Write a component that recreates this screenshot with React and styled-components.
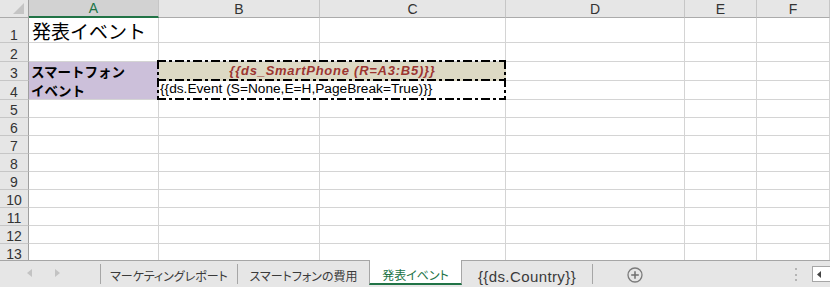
import React from 'react';
import styled, { createGlobalStyle } from 'styled-components';

const GlobalStyle = createGlobalStyle`
  html, body {
    margin: 0;
    padding: 0;
    background: #fff;
    overflow: hidden;
  }
  body {
    width: 830px;
    height: 287px;
    font-family: "Liberation Sans", "Noto Sans CJK JP", sans-serif;
  }
`;

const COLUMNS = ['A', 'B', 'C', 'D', 'E', 'F'];
const TAIL_COLUMNS = ['D', 'E', 'F'];
const PLAIN_ROWS = [5, 6, 7, 8, 9, 10, 11, 12, 13];

const App = () => {
  return (
    <Window>
      <GlobalStyle />

      <Sheet>
        <Corner>
          <svg width="11" height="11" viewBox="0 0 11 11">
            <path d="M11 0 L11 11 L0 11 Z" fill="#c4c4c4" />
          </svg>
        </Corner>
        {COLUMNS.map((c) => (
          <ColHead key={c} $selected={c === 'A'}>{c}</ColHead>
        ))}

        {/* row 1 */}
        <RowHead>1</RowHead>
        <TitleCell>発表イベント</TitleCell>
        {COLUMNS.slice(1).map((c) => <Cell key={c} />)}

        {/* row 2 */}
        <RowHead>2</RowHead>
        {COLUMNS.map((c) => <Cell key={c} />)}

        {/* rows 3-4 */}
        <RowHead>3</RowHead>
        <LabelCell>{'スマートフォン\nイベント'}</LabelCell>
        <FrameBlock>
          <RangeCell>{'{{ds_SmartPhone (R=A3:B5)}}'}</RangeCell>
          <EventCell>{'{{ds.Event (S=None,E=H,PageBreak=True)}}'}</EventCell>
          <DashFrame width="349" height="40" viewBox="0 0 349 40">
            <g stroke="#000" strokeWidth="2" strokeDasharray="9 3 3 3" fill="none" shapeRendering="crispEdges">
              <path d="M0 1 H349" />
              <path d="M0 20 H349" />
              <path d="M0 39 H349" />
              <path d="M1 0 V40" />
              <path d="M348 0 V40" />
            </g>
          </DashFrame>
        </FrameBlock>
        {TAIL_COLUMNS.map((c) => <Cell key={c} />)}
        <RowHead>4</RowHead>
        {TAIL_COLUMNS.map((c) => <Cell key={c} />)}

        {PLAIN_ROWS.map((r) => (
          <React.Fragment key={r}>
            <RowHead>{r}</RowHead>
            {COLUMNS.map((c) => <Cell key={c} />)}
          </React.Fragment>
        ))}
      </Sheet>

      <TabBar>
        <Nav>
          <svg width="5" height="8" viewBox="0 0 5 8">
            <path d="M5 0 V8 L0 4 Z" fill="#c3c3c3" />
          </svg>
          <svg width="5" height="8" viewBox="0 0 5 8">
            <path d="M0 0 V8 L5 4 Z" fill="#c3c3c3" />
          </svg>
        </Nav>
        <Divider />
        <Tab $w={136}>マーケティングレポート</Tab>
        <Divider />
        <Tab $w={131}>スマートフォンの費用</Tab>
        <ActiveTab>発表イベント</ActiveTab>
        <Tab $w={130} $latin>{'{{ds.Country}}'}</Tab>
        <Divider />
        <AddSheet>
          <svg width="16" height="16" viewBox="0 0 16 16">
            <circle cx="8" cy="8" r="7" fill="none" stroke="#7b7b7b" strokeWidth="1.3" />
            <path d="M8 4.2 V11.8 M4.2 8 H11.8" stroke="#6f6f6f" strokeWidth="1.5" />
          </svg>
        </AddSheet>
        <Spacer />
        <Grip>
          <span /><span /><span />
        </Grip>
        <ScrollBox>
          <svg width="4" height="7" viewBox="0 0 4 7">
            <path d="M4 0 V7 L0 3.5 Z" fill="#444" />
          </svg>
        </ScrollBox>
      </TabBar>
    </Window>
  );
};

export default App;

const Window = styled.div`
  width: 830px;
  height: 287px;
  display: flex;
  flex-direction: column;
  overflow: hidden;
`;

const Sheet = styled.div`
  height: 260px;
  flex: none;
  overflow: hidden;
  display: grid;
  grid-template-columns: 29px 130px 161px 186px 179px 72px 73px;
  grid-template-rows: 18px 25px 19px 19px 19px repeat(9, 18px);
`;

const Cell = styled.div`
  box-sizing: border-box;
  border-right: 1px solid #d4d4d4;
  border-bottom: 1px solid #d4d4d4;
  background: #fff;
`;

const Corner = styled.div`
  box-sizing: border-box;
  background: #e6e6e6;
  border-right: 1px solid #9f9f9f;
  border-bottom: 1px solid #ababab;
  display: flex;
  align-items: flex-end;
  justify-content: flex-end;
  padding: 0 4px 3px 0;
`;

const ColHead = styled.div`
  box-sizing: border-box;
  background: ${(p) => (p.$selected ? '#d2d2d2' : '#e6e6e6')};
  color: ${(p) => (p.$selected ? '#217346' : '#333')};
  border-right: 1px solid #c6c6c6;
  border-bottom: ${(p) => (p.$selected ? '2px solid #217346' : '1px solid #ababab')};
  display: flex;
  align-items: flex-end;
  justify-content: center;
  font-size: 14px;
  line-height: 14px;
  padding-bottom: 1px;
`;

const RowHead = styled.div`
  box-sizing: border-box;
  background: #e6e6e6;
  color: #333;
  border-right: 1px solid #9f9f9f;
  border-bottom: 1px solid #c6c6c6;
  display: flex;
  align-items: flex-end;
  justify-content: center;
  font-size: 14px;
  line-height: 14px;
`;

const TitleCell = styled(Cell)`
  display: flex;
  align-items: flex-end;
  padding: 0 0 2px 3px;
  font-family: "Noto Sans CJK JP", sans-serif;
  font-size: 19px;
  line-height: 19px;
  color: #000;
  white-space: nowrap;
`;

const LabelCell = styled(Cell)`
  grid-row: span 2;
  background: #ccc0da;
  padding-left: 2px;
  font-family: "Noto Sans CJK JP", sans-serif;
  font-weight: bold;
  font-size: 13.5px;
  line-height: 19px;
  white-space: pre-line;
  color: #000;
`;

const FrameBlock = styled.div`
  grid-column: span 2;
  grid-row: span 2;
  position: relative;
  display: grid;
  grid-template-rows: 19px 19px;
`;

const RangeCell = styled.div`
  background: #ddd9c4;
  color: #9c3531;
  font-weight: bold;
  font-style: italic;
  font-size: 13px;
  letter-spacing: 0.75px;
  line-height: 18px;
  text-align: center;
  white-space: nowrap;
`;

const EventCell = styled.div`
  background: #fff;
  color: #000;
  font-size: 13.7px;
  line-height: 16px;
  padding-left: 1px;
  white-space: nowrap;
`;

const DashFrame = styled.svg`
  position: absolute;
  left: -2px;
  top: -2px;
  pointer-events: none;
`;

const TabBar = styled.div`
  height: 27px;
  flex: none;
  box-sizing: border-box;
  display: flex;
  align-items: stretch;
  background: #e6e6e6;
  border-top: 1px solid #a6a6a6;
`;

const Nav = styled.div`
  width: 100px;
  box-sizing: border-box;
  display: flex;
  align-items: center;
  gap: 23px;
  padding: 0 0 2px 27px;
`;

const Divider = styled.div`
  width: 1px;
  height: 20px;
  align-self: center;
  background: #a6a6a6;
  flex: none;
`;

const Tab = styled.div`
  width: ${(p) => p.$w}px;
  flex: none;
  box-sizing: border-box;
  display: flex;
  align-items: flex-end;
  justify-content: center;
  padding-bottom: 3px;
  font-family: "Liberation Sans", "Noto Sans CJK JP", sans-serif;
  font-size: ${(p) => (p.$latin ? 15 : 12)}px;
  letter-spacing: ${(p) => (p.$latin ? 0.4 : 0)}px;
  line-height: 14px;
  font-feature-settings: "palt";
  color: #3a3a3a;
  white-space: nowrap;
`;

const ActiveTab = styled(Tab)`
  width: 93px;
  margin: -1px 0 2px;
  padding-bottom: 0;
  background: #fff;
  color: #217346;
  border-left: 1px solid #a6a6a6;
  border-right: 1px solid #a6a6a6;
  border-bottom: 2px solid #217346;
`;

const AddSheet = styled.div`
  display: flex;
  align-items: center;
  margin-left: 34px;
  padding-top: 1px;
`;

const Spacer = styled.div`
  flex: 1;
`;

const Grip = styled.div`
  display: flex;
  flex-direction: column;
  justify-content: center;
  gap: 3.5px;
  margin-right: 15px;
  padding-top: 1px;

  span {
    display: block;
    width: 2px;
    height: 2px;
    background: #b4b4b4;
  }
`;

const ScrollBox = styled.div`
  width: 20px;
  height: 16px;
  align-self: center;
  box-sizing: border-box;
  margin: 0 -2px 0 0;
  background: #fff;
  border: 1px solid #a6a6a6;
  display: flex;
  align-items: center;
  padding-left: 4px;
`;
